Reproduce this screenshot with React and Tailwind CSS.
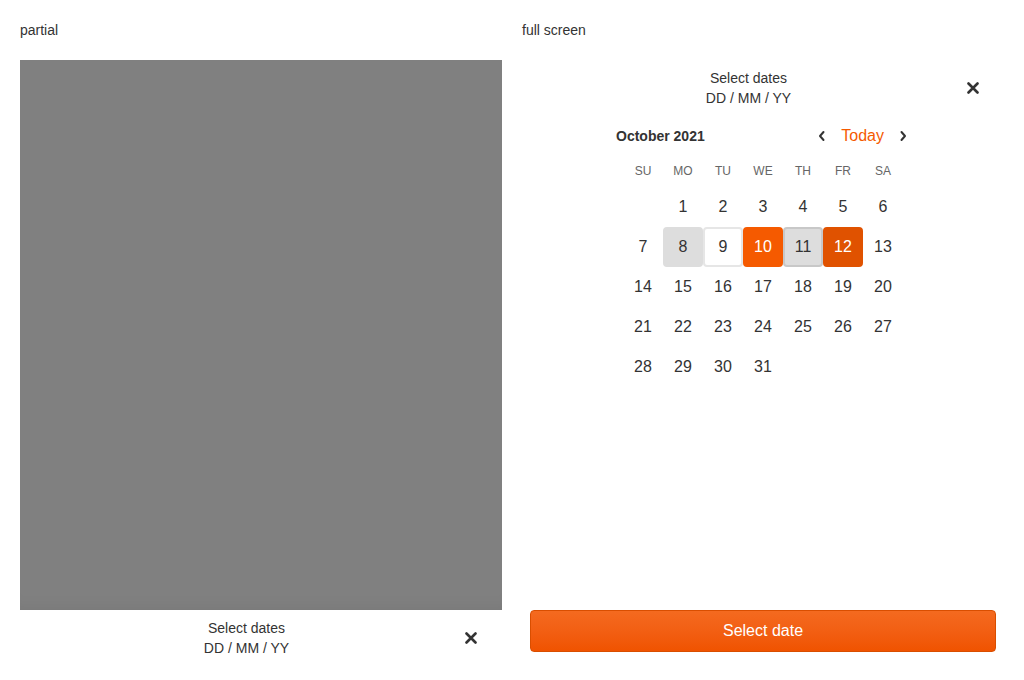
import React from "react";

const weeks = [
  [null, 1, 2, 3, 4, 5, 6],
  [7, 8, 9, 10, 11, 12, 13],
  [14, 15, 16, 17, 18, 19, 20],
  [21, 22, 23, 24, 25, 26, 27],
  [28, 29, 30, 31, null, null, null],
];

const dayStyles = {
  8: "bg-[#dddddd] border-[#dddddd] text-[#333]",
  9: "bg-white border-[#e6e6e6] text-[#333]",
  10: "bg-[#f55a00] border-[#f55a00] text-white",
  11: "bg-[#dddddd] border-[#c8c8c8] text-[#333]",
  12: "bg-[#e05200] border-[#e05200] text-white",
};

function CloseIcon() {
  return (
    <svg width="12" height="12" viewBox="0 0 12 12">
      <path d="M1.5 1.5 L10.5 10.5 M10.5 1.5 L1.5 10.5" stroke="#333" strokeWidth="2.6" strokeLinecap="round" />
    </svg>
  );
}

function Chevron({ dir }) {
  return (
    <svg width="8" height="12" viewBox="0 0 8 12">
      <path
        d={dir === "left" ? "M5.5 2 L2 6 L5.5 10" : "M2.5 2 L6 6 L2.5 10"}
        fill="none"
        stroke="#333"
        strokeWidth="2"
        strokeLinecap="round"
        strokeLinejoin="round"
      />
    </svg>
  );
}

function Header() {
  return (
    <div className="flex items-center pt-2 pl-3">
      <div className="flex-1 text-center text-sm leading-5 text-[#333]">
        <div>Select dates</div>
        <div>DD / MM / YY</div>
      </div>
      <button className="w-5 h-5 mr-[21px] flex items-center justify-center">
        <CloseIcon />
      </button>
    </div>
  );
}

function Calendar() {
  return (
    <div className="w-[296px] mx-auto mt-[18px]">
      <div className="flex items-center justify-between h-5 pl-[1px]">
        <span className="text-sm font-bold text-[#333]">October 2021</span>
        <div className="flex items-center gap-[12px] pr-[4px]">
          <Chevron dir="left" />
          <span className="text-base text-[#f55a00] px-[3px]">Today</span>
          <Chevron dir="right" />
        </div>
      </div>
      <div className="w-[280px] mx-auto mt-[15px]">
        <div className="grid grid-cols-7 h-[20px] items-center">
          {["SU", "MO", "TU", "WE", "TH", "FR", "SA"].map((d) => (
            <div key={d} className="text-center text-xs text-[#666]">{d}</div>
          ))}
        </div>
        <div className="mt-[6px]">
          {weeks.map((week, i) => (
            <div key={i} className="grid grid-cols-7">
              {week.map((day, j) => (
                <div
                  key={j}
                  className={`h-10 flex items-center justify-center text-base rounded-[4px] border-2 ${
                    day && dayStyles[day] ? dayStyles[day] : "border-transparent text-[#333]"
                  }`}
                >
                  {day}
                </div>
              ))}
            </div>
          ))}
        </div>
      </div>
    </div>
  );
}

export default function App() {
  return (
    <div className="bg-white w-[1024px] h-[680px] p-5 font-['Liberation_Sans',Arial,sans-serif] text-[#333]">
      <div className="grid grid-cols-2 gap-5 w-[984px]">
        <div className="text-sm leading-5">partial</div>
        <div className="text-sm leading-5">full screen</div>
      </div>
      <div className="grid grid-cols-2 gap-5 w-[984px] mt-5 h-[600px]">
        <div className="flex flex-col">
          <div className="h-[550px] bg-[#808080] shadow-[inset_0_-14px_14px_-10px_rgba(0,0,0,0.05)]" />
          <Header />
        </div>
        <div className="flex flex-col">
          <Header />
          <Calendar />
          <div className="flex-1" />
          <button className="mx-2 mb-2 h-[42px] rounded-[4px] border border-[#d94e00] bg-gradient-to-b from-[#f46a1f] to-[#f05300] text-white text-base">
            Select date
          </button>
        </div>
      </div>
    </div>
  );
}
